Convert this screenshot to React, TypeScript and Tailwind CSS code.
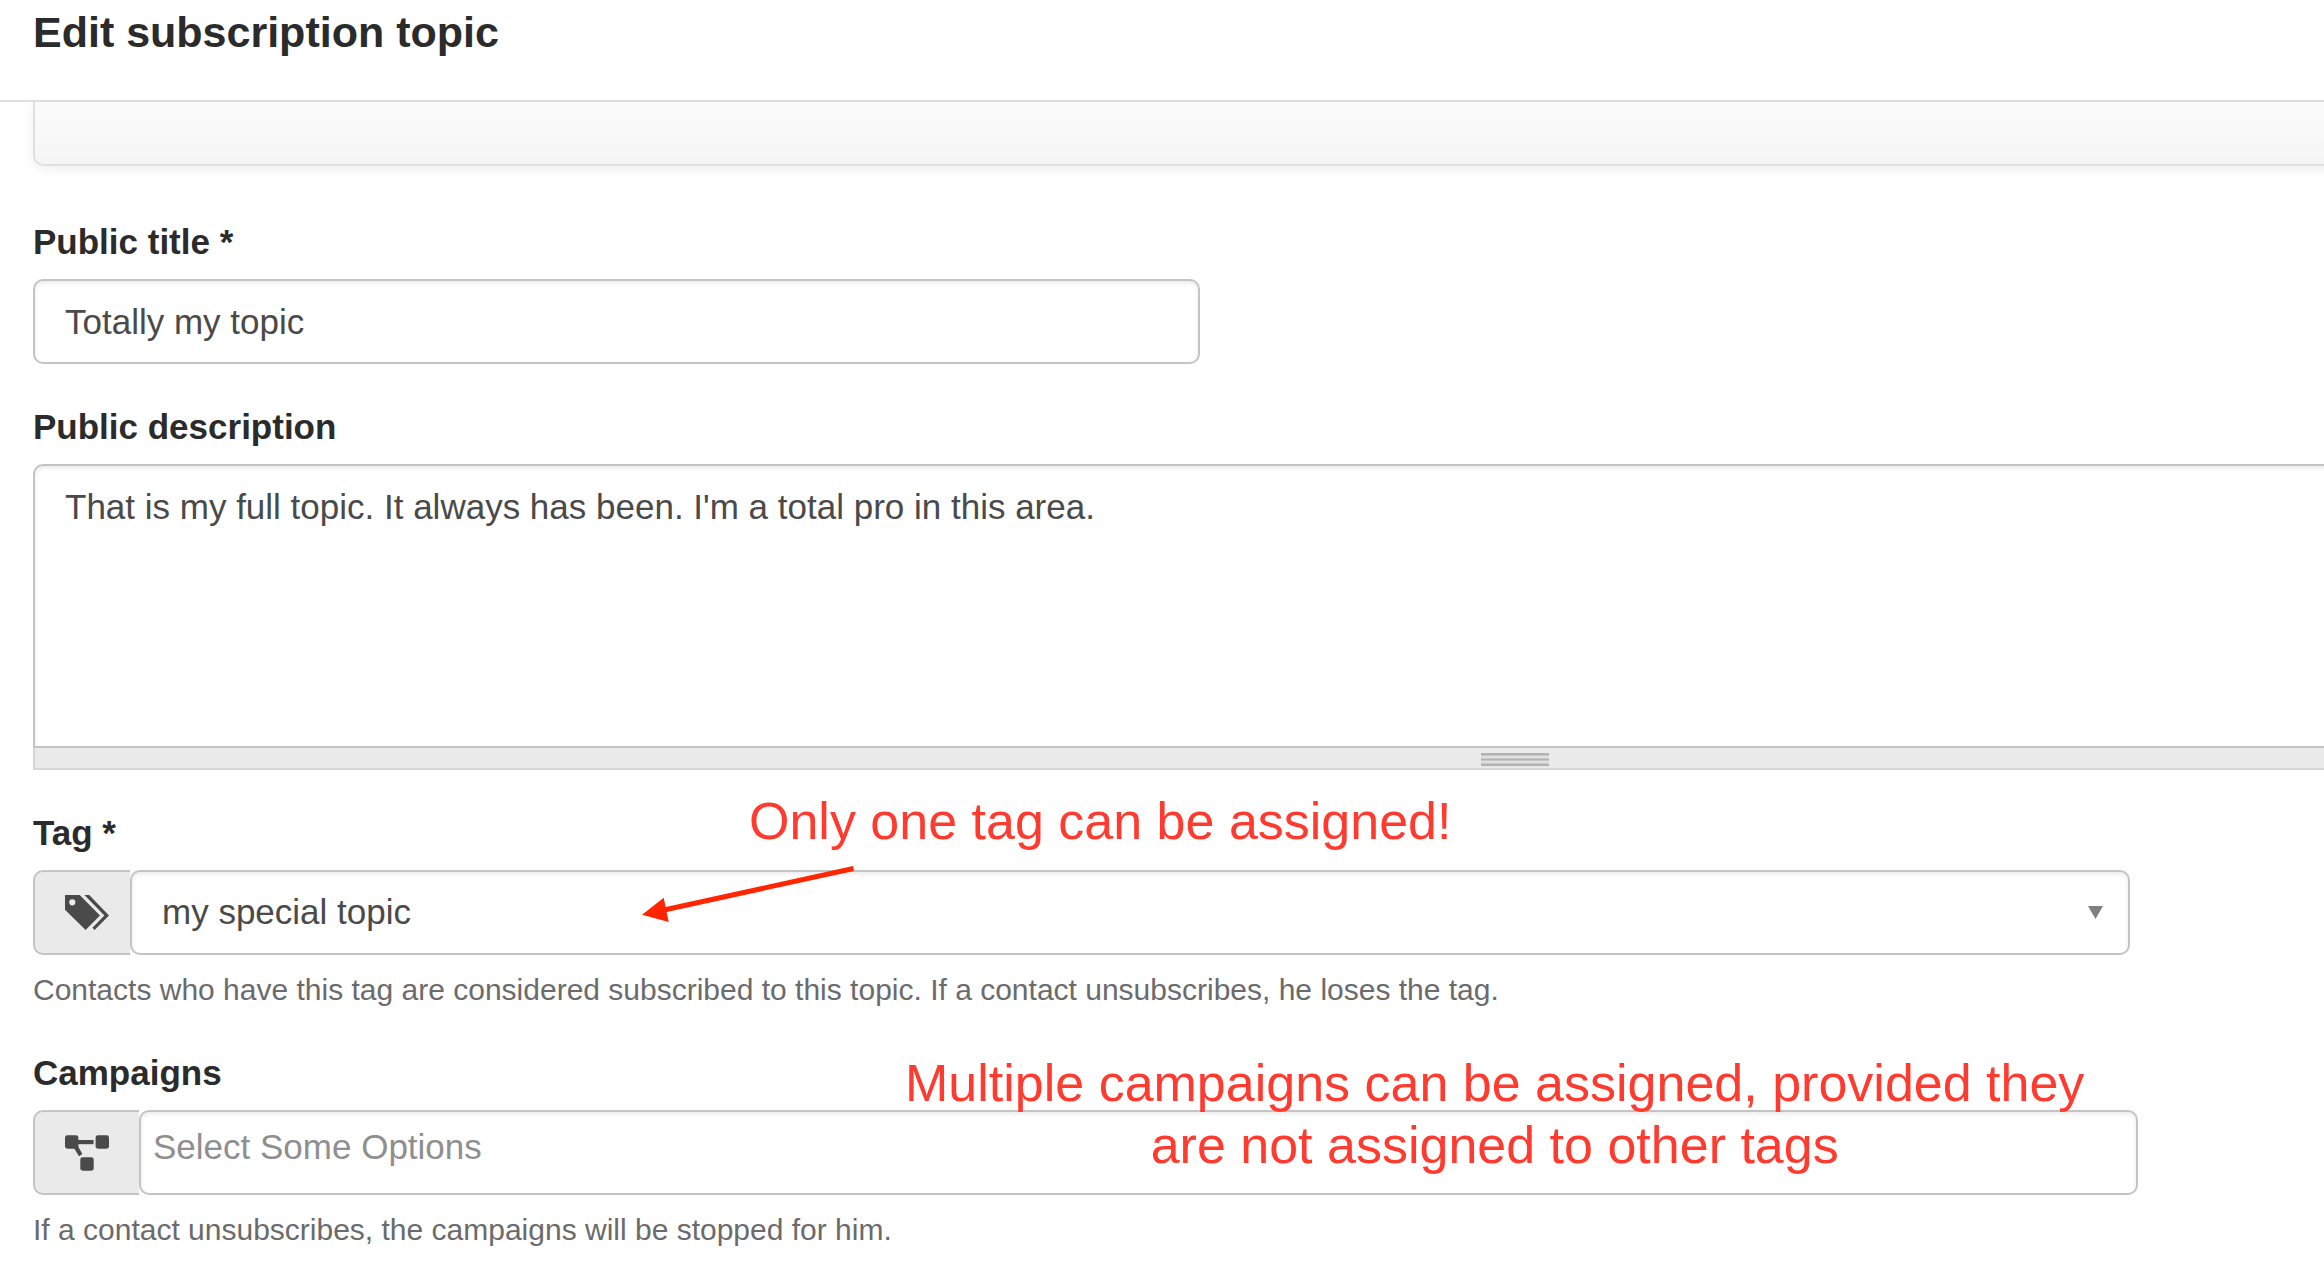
import type { ReactNode } from "react";

const fieldBox =
  "h-[85px] rounded-[10px] border-2 border-[#c4c4c4] bg-white text-[35px] text-[#4a4a4a] shadow-[inset_0_2px_4px_rgba(0,0,0,0.09)] outline-none";

const addonBox =
  "flex h-[85px] shrink-0 items-center rounded-l-[10px] border-2 border-r-0 border-[#c4c4c4] bg-[#eaeaea] pl-[30px] text-[#4a4a4a]";

function TagsIcon() {
  return (
    <svg className="h-9 w-11 shrink-0" viewBox="0 0 44 36" fill="currentColor" aria-hidden="true">
      <path
        fillRule="evenodd"
        d="M0 0H14.7L35 20.6L20.6 35L0 14.8ZM7.3 4.2a3.1 3.1 0 1 0 0 6.2a3.1 3.1 0 1 0 0-6.2Z"
      />
      <path d="M19.4 0H24.2L44 20.4L29.6 35L27.4 32.8L39.4 20.6Z" />
    </svg>
  );
}

function FlowIcon() {
  return (
    <svg className="h-9 w-11 shrink-0" viewBox="0 0 44 36" fill="currentColor" aria-hidden="true">
      <rect x="0" y="0.3" width="13.4" height="13.4" rx="2.4" />
      <rect x="30.6" y="0.3" width="13.4" height="13.4" rx="2.4" />
      <rect x="15.3" y="22.3" width="13.4" height="13.4" rx="2.4" />
      <path d="M12 5H28.6V9.2H12Z" />
      <path d="M8.6 12.6L12.6 10.6L17.4 19L14 21.2Z" />
    </svg>
  );
}

function Grip() {
  return (
    <svg className="h-[13px] w-[68px]" viewBox="0 0 68 13" shapeRendering="crispEdges" aria-hidden="true">
      <rect width="68" height="13" fill="#c8c8c8" />
      <rect width="68" height="2" fill="#b2b2b2" />
      <rect y="3" width="68" height="2" fill="#e0e0e0" />
      <rect y="6" width="68" height="1" fill="#b2b2b2" />
      <rect y="8" width="68" height="2" fill="#e0e0e0" />
      <rect y="11" width="68" height="2" fill="#b2b2b2" />
    </svg>
  );
}

function Label({ htmlFor, children }: { htmlFor: string; children: ReactNode }) {
  return (
    <label htmlFor={htmlFor} className="mb-[18px] block text-[35px] leading-[38px] font-bold text-[#2b2b2b]">
      {children}
    </label>
  );
}

function Help({ children }: { children: ReactNode }) {
  return <p className="mt-[15px] text-[30px] leading-10 text-[#6b6b6b]">{children}</p>;
}

export default function App() {
  return (
    <div className="min-h-screen overflow-x-hidden bg-white font-['Liberation_Sans',Arial,sans-serif]">
      <header className="border-b-2 border-[#e0e0e0] bg-white px-[33px] pt-1 pb-10">
        <h1 className="text-[43px] leading-14 font-bold text-[#2b2b2b]">Edit subscription topic</h1>
      </header>

      <main className="pl-[33px]">
        <div className="mr-[-673px] h-16 rounded-b-[10px] border-2 border-t-0 border-[#e0e0e0] bg-linear-to-b from-[#fcfcfc] to-[#f5f5f5] shadow-[0_4px_12px_rgba(0,0,0,0.06)]" />

        <form className="mt-[57px] flex flex-col gap-11">
          <div>
            <Label htmlFor="title">Public title *</Label>
            <input
              id="title"
              type="text"
              defaultValue="Totally my topic"
              className={`${fieldBox} block w-full max-w-[1167px] px-[30px]`}
            />
          </div>

          <div className="mr-[-673px]">
            <Label htmlFor="description">Public description</Label>
            <textarea
              id="description"
              defaultValue="That is my full topic. It always has been. I'm a total pro in this area."
              className="block h-[284px] w-full resize-none rounded-t-[10px] border-2 border-[#c4c4c4] bg-white px-[30px] py-[21px] text-[35px] leading-10 text-[#4a4a4a] shadow-[inset_0_2px_4px_rgba(0,0,0,0.09)] outline-none"
            />
            <div className="flex h-[22px] justify-center border-2 border-t-0 border-[#d6d6d6] bg-[#eaeaea] pt-[5px]">
              <Grip />
            </div>
          </div>

          <div className="relative">
            <Label htmlFor="tag">Tag *</Label>
            <div className="mr-[194px] flex">
              <span className={`${addonBox} w-[97px]`}>
                <TagsIcon />
              </span>
              <div className="relative flex-1">
                <select id="tag" className={`${fieldBox} block w-full appearance-none px-[30px]`}>
                  <option>my special topic</option>
                </select>
                <svg
                  className="pointer-events-none absolute top-9 right-[27px] h-[13px] w-[15px] text-[#808080]"
                  viewBox="0 0 15 13"
                  fill="currentColor"
                  aria-hidden="true"
                >
                  <path d="M0 0H15L7.5 13Z" />
                </svg>
              </div>
            </div>
            <Help>
              Contacts who have this tag are considered subscribed to this topic. If a contact unsubscribes, he loses
              the tag.
            </Help>

            <p className="pointer-events-none absolute -top-6 left-[716px] text-[52px] leading-[62px] whitespace-nowrap text-[#ff3b30]">
              Only one tag can be assigned!
            </p>
            <svg
              className="pointer-events-none absolute top-[46px] left-[607px] h-[70px] w-[220px]"
              viewBox="0 0 220 70"
              aria-hidden="true"
            >
              <path d="M213.5 8.5L24 50" stroke="#ff2600" strokeWidth="5" />
              <path d="M2 54.8L23.7 37.7L28.7 62Z" fill="#ff2600" />
            </svg>
          </div>

          <div className="relative">
            <Label htmlFor="campaigns">Campaigns</Label>
            <div className="mr-[186px] flex">
              <span className={`${addonBox} w-[106px]`}>
                <FlowIcon />
              </span>
              <input
                id="campaigns"
                type="text"
                placeholder="Select Some Options"
                className={`${fieldBox} block min-w-0 flex-1 px-3 pb-3 placeholder:text-[#8f8f8f]`}
              />
            </div>
            <Help>If a contact unsubscribes, the campaigns will be stopped for him.</Help>

            <p className="pointer-events-none absolute -top-0.5 left-[872px] text-center text-[52px] leading-[62px] whitespace-nowrap text-[#ff3b30]">
              Multiple campaigns can be assigned, provided they
              <br />
              are not assigned to other tags
            </p>
          </div>
        </form>
      </main>
    </div>
  );
}
